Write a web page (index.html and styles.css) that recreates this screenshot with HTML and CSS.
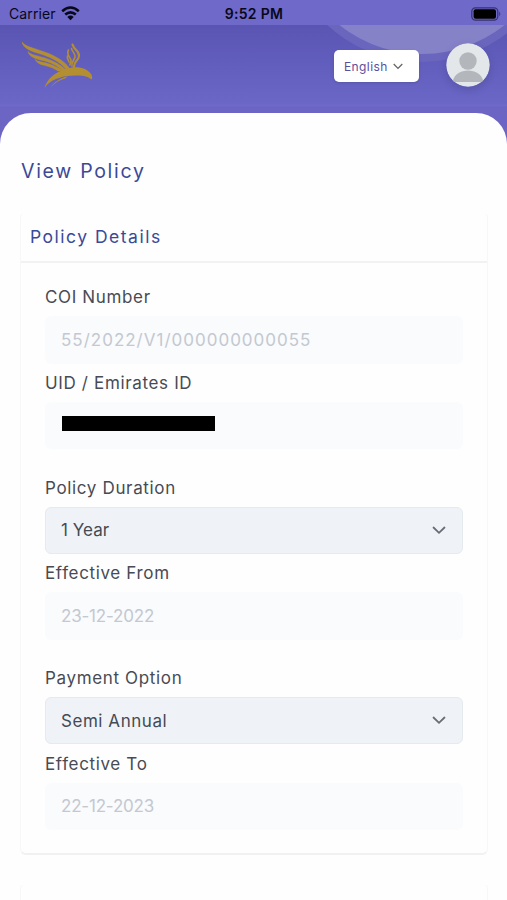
FILE: index.html
```html
<!DOCTYPE html>
<html lang="en">
<head>
<meta charset="utf-8">
<title>View Policy</title>
<link rel="stylesheet" href="styles.css">
</head>
<body>
<div class="status">
  <div class="carrier"><span>Carrier</span>
    <svg width="19" height="15" viewBox="0 0 19 15"><g fill="none" stroke="#08081a" stroke-width="2.6"><path d="M1.2 5.2Q9.500 -2.200 17.800 5.200"/><path d="M4.200 8.600Q9.500 4 14.800 8.600"/></g><path d="M6.300 10.900Q9.500 8.300 12.700 10.900L9.500 14.200Z" fill="#08081a"/></svg>
  </div>
  <div class="time">9:52 PM</div>
  <svg class="battery" width="31" height="14" viewBox="0 0 31 14"><rect x=".8" y=".8" width="26" height="12.400" rx="3.600" fill="none" stroke="#37336f" stroke-width="1.200"/><rect x="2.600" y="2.300" width="22.400" height="9.400" rx="2" fill="#000"/><path d="M28.300 4.600Q30.300 7 28.300 9.400Z" fill="#37336f"/></svg>
</div>
<header class="header">
  <svg class="bubbles" width="507" height="88" viewBox="0 25 507 88"><circle cx="422" cy="-78" r="140" fill="#6a66be"/><circle cx="422" cy="-78" r="132" fill="#8682c8"/></svg>
  <svg class="logo" width="72" height="48" viewBox="22 42 72 48" fill="#b48f32">
    <g stroke="#b48f32" stroke-width=".5">
    <path d="M22 42C25 46 30 47 40 50.500C52 54 64 60 70 69L66 69C59 61 50 57 39 53.500C30 51 23 48 22 42Z"/>
    <path d="M28 51.500C31 55 37 55.500 45 58C54 61 61 65 66 70L62 70C56 65 51 62.500 43 60.500C36 59 29 57 28 51.500Z"/>
    <path d="M35 59.500C38 62 42 61.500 48 63.500C54 65.500 59 68 63 71L58 71C53 67.500 50 67 45 65.500C40 64.500 37 63 35 59.500Z"/>
    </g>
    <g fill="none" stroke="#b48f32" stroke-linecap="round"><path stroke-width="2.200" d="M72.500 44.500C74 50 79.500 51 79 56C78.500 61 73.500 61 74 67"/><path stroke-width="1.600" d="M71.500 48.500C72 52 75.500 53 75 57C74 61 71 62 72 66M68.500 50C66 54 70 57 71 60C71.500 62 70 63 70 65M67.500 56C66.500 59 69 60 69 62"/></g>
    <path d="M44.500 88C47 79 55 72 66 69C76 65 87 68 91 74Q93 77 91.500 79.500Q88.500 76.500 84 76C75 75 66 75.500 59 78C52 80 48 83 44.500 88Z"/>
    <path d="M51 87.500C54 82 60 78.500 68 76L65 78.500C59 80.500 54 83 51 87.500Z"/>
  </svg>
  <div class="lang"><span>English</span><svg width="10" height="7" viewBox="0 0 10 7" fill="none" stroke="#666" stroke-width="1.300"><path d="M.7 1L5 5.400L9.300 1"/></svg></div>
  <svg class="avatar" width="44" height="44" viewBox="0 0 44 44"><circle cx="22" cy="22" r="21.700" fill="#e3e7ea"/><g fill="#b3b7bb"><circle cx="22" cy="18" r="8.700"/><path d="M6.500 39C8 31 15 27.500 22 27.500S36 31 37.500 39Z"/></g></svg>
</header>
<main class="sheet">
  <h1>View Policy</h1>
  <section class="card">
    <h2>Policy Details</h2>
    <div class="fields">
      <div class="group">
        <div class="label">COI Number</div><div class="input number">55/2022/V1/000000000055</div>
        <div class="label">UID / Emirates ID</div><div class="input"><span class="redacted"></span></div>
      </div>
      <div class="group">
        <div class="label">Policy Duration</div><div class="input select year"><span>1 Year</span><svg width="14" height="9" viewBox="0 0 14 9"><path d="M1.500 1.500L7 6.800L12.500 1.500"/></svg></div>
        <div class="label">Effective From</div><div class="input date">23-12-2022</div>
      </div>
      <div class="group">
        <div class="label">Payment Option</div><div class="input select"><span>Semi Annual</span><svg width="14" height="9" viewBox="0 0 14 9"><path d="M1.500 1.500L7 6.800L12.500 1.500"/></svg></div>
        <div class="label">Effective To</div><div class="input date">22-12-2023</div>
      </div>
    </div>
  </section>
  <section class="card next"></section>
</main>
</body>
</html>
```
FILE: styles.css
```css
* { box-sizing: border-box; }
body { margin: 0; width: 507px; height: 900px; overflow: hidden; background: #6c65c3; font-family: Inter, "Liberation Sans", sans-serif; }
.status { height: 25px; padding: 2px 8px 0 9px; background: #6f69c9; display: grid; grid-template-columns: 1fr auto 1fr; align-items: center; color: #08081a; font-size: 14px; }
.carrier { display: flex; align-items: center; gap: 5px; letter-spacing: .1px; }
.time { font-weight: 600; letter-spacing: .3px; }
.battery { justify-self: end; margin-right: -3px; }
.header { position: relative; height: 88px; padding: 0 18px 0 22px; display: flex; align-items: flex-start; background: linear-gradient(#5a55b3, #6a67c7 79px, #716bcb 80px, #6c65c3 82px); }
.bubbles { position: absolute; left: 0; top: 0; }
.logo { position: relative; margin-top: 17px; }
.lang { position: relative; margin: 25px 27px 0 auto; width: 85px; height: 32px; padding: 0 16px 0 10px; border-radius: 5px; background: #fff; display: flex; align-items: center; justify-content: space-between; color: #5a4ea0; font-size: 12px; letter-spacing: .4px; box-shadow: 0 1px 3px #0002; }
.avatar { position: relative; margin-top: 18px; margin-right: -1px; border-radius: 50%; box-shadow: 0 3px 8px #0002; }
.sheet { height: 787px; padding: 0 19px 0 20px; border-radius: 31px 31px 0 0; background: #fefefe; overflow: hidden; }
h1, h2 { margin: 0; color: #3a4a98; font-weight: 400; }
h1 { padding: 44px 0 0 1px; height: 99px; font-size: 19.5px; line-height: 29px; letter-spacing: 1.7px; }
.card { height: 643px; border: 1px solid #f7f7f8; border-top-color: transparent; border-bottom: 2px solid #f1f1f2; border-radius: 6px; }
h2 { height: 50px; padding: 0 9px; line-height: 48px; font-size: 17.5px; letter-spacing: 1.5px; border-bottom: 2px solid #f2f2f3; }
.fields { padding: 15px 24px 0; display: flex; flex-direction: column; gap: 19.5px; }
.label { height: 38px; line-height: 38.500px; font-size: 17px; letter-spacing: .65px; color: #484b54; }
.input { height: 47.500px; padding: 0 16px; border-radius: 6px; background: #f9fbfd; display: flex; align-items: center; font-size: 17px; letter-spacing: .55px; color: #c4c8d1; }
.number { letter-spacing: 1px; }
.date { letter-spacing: -.2px; }
.select { height: 47px; margin-bottom: .5px; justify-content: space-between; background: #eff3f7; border: 1px solid #e5eaee; color: #454a54; padding: 0 16px 0 15px; }
.year { letter-spacing: .05px; }
.select path { fill: none; stroke: #686c73; stroke-width: 1.8; stroke-linecap: round; }
.redacted { width: 153px; height: 15px; margin: -3px 0 0 1px; background: #000; }
.next { margin-top: 28px; }
```
